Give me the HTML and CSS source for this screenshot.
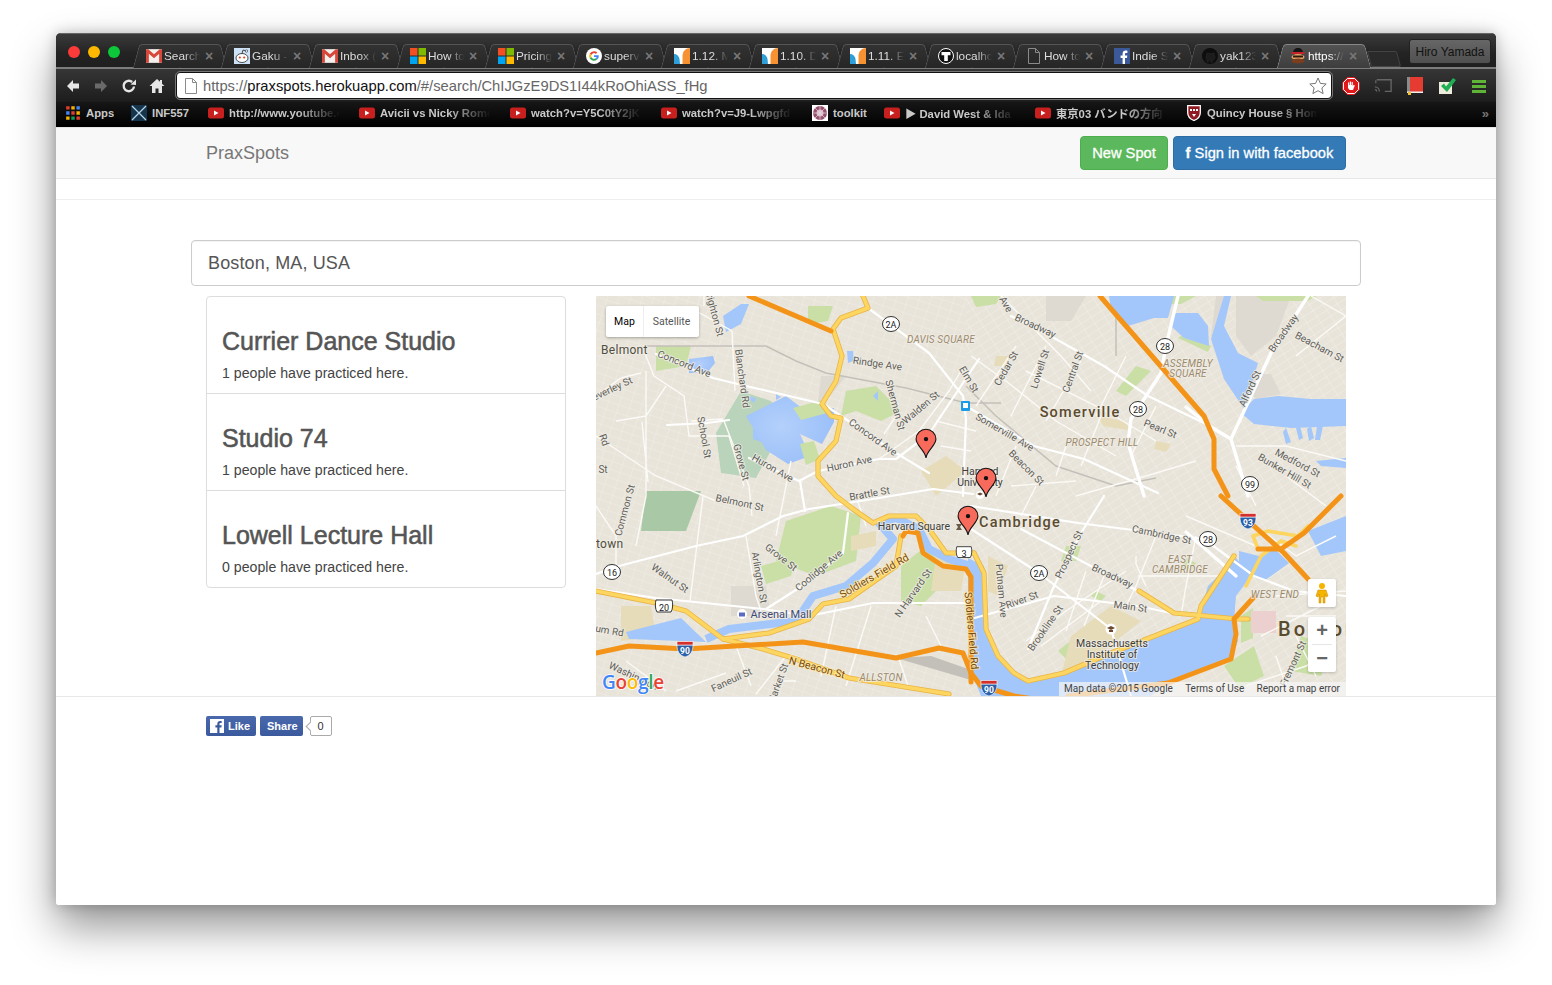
FILE: index.html
```html
<!DOCTYPE html>
<html lang="en">
<head>
<meta charset="utf-8">
<title>PraxSpots</title>
<link rel="stylesheet" href="styles.css">
</head>
<body>
<svg class="defs" width="0" height="0" aria-hidden="true">
  <defs>
    <symbol id="i-gmail" viewBox="0 0 14 12"><rect width="14" height="12" fill="#f4f0ee"/><path d="M0 0h2l5 4.500L12 0h2v12h-2.500V4L7 8 2.500 4v8H0z" fill="#d8473a"/></symbol>
    <symbol id="i-ms" viewBox="0 0 16 16"><rect width="7.500" height="7.500" fill="#f25022"/><rect x="8.500" width="7.500" height="7.500" fill="#7fba00"/><rect y="8.500" width="7.500" height="7.500" fill="#00a4ef"/><rect x="8.500" y="8.500" width="7.500" height="7.500" fill="#ffb900"/></symbol>
    <symbol id="i-reddit" viewBox="0 0 16 16"><rect width="16" height="16" fill="#cee3f8"/><ellipse cx="8" cy="10" rx="6" ry="4.500" fill="#fff" stroke="#222" stroke-width=".8"/><circle cx="5.800" cy="9.500" r="1.100" fill="#e0431f"/><circle cx="10.200" cy="9.500" r="1.100" fill="#e0431f"/><path d="M8 5.500 9 2l3 .8" fill="none" stroke="#222" stroke-width=".8"/><circle cx="12.500" cy="3" r="1.200" fill="#fff" stroke="#222" stroke-width=".6"/></symbol>
    <symbol id="i-g" viewBox="0 0 16 16"><circle cx="8" cy="8" r="8" fill="#fff"/><path d="M8 3.200a4.800 4.800 0 0 1 3.300 1.300L9.900 5.900A2.800 2.800 0 0 0 5.300 7L3.700 5.700A4.800 4.800 0 0 1 8 3.200z" fill="#ea4335"/><path d="M3.700 5.700 5.300 7a2.800 2.800 0 0 0 0 2L3.700 10.300a4.800 4.800 0 0 1 0-4.600z" fill="#fbbc05"/><path d="M3.700 10.300 5.300 9a2.800 2.800 0 0 0 4.300 1.300l1.500 1.200A4.800 4.800 0 0 1 3.700 10.300z" fill="#34a853"/><path d="M12.800 7.200H8v1.900h2.700a2.400 2.400 0 0 1-1.100 1.200l1.500 1.200a4.800 4.800 0 0 0 1.700-4.300z" fill="#4285f4"/></symbol>
    <symbol id="i-jira" viewBox="0 0 16 16"><rect width="16" height="16" fill="#fff"/><path d="M0 6c3 0 5 2 5.500 5l.5 5H0z" fill="#2f9fd8"/><path d="M16 0c-4 0-7.500 3-7.500 8v8H16z" fill="#f79232"/></symbol>
    <symbol id="i-t" viewBox="0 0 16 16"><circle cx="8" cy="8" r="7.500" fill="#111" stroke="#fff"/><path d="M3.500 4h9v3.200H9.800V13H6.200V7.200H3.500z" fill="#fff"/></symbol>
    <symbol id="i-doc" viewBox="0 0 12 16"><path d="M.5.500h7l4 4v11H.500z M7.500.500v4h4" fill="none" stroke="#8a8a8a"/></symbol>
    <symbol id="i-fb" viewBox="0 0 16 16"><rect width="16" height="16" fill="#3b5998"/><path d="M11 16v-6h2l.3-2.400H11V6c0-.7.3-1.100 1.200-1.100h1.200V2.700c-.3 0-1-.1-1.800-.1-1.800 0-3 1.100-3 3.100v1.900h-2V10h2v6z" fill="#fff"/></symbol>
    <symbol id="i-gh" viewBox="0 0 16 16"><circle cx="8" cy="8" r="8" fill="#0e0e0e"/><path d="M6 15v-2.200c-2 .4-2.600-.9-2.800-1.500M10 15v-2.600c2-.3 3-1.400 3-3.300 0-.9-.3-1.600-.8-2.100.1-.6.100-1.300-.2-1.900-.7 0-1.300.3-1.900.7a7 7 0 0 0-3.200 0C6.300 5.400 5.700 5.100 5 5.100c-.3.600-.3 1.300-.2 1.900-.5.500-.8 1.200-.8 2.100 0 1.900 1 3 3 3.300" fill="#1c1c1c" stroke="#2b2b2b" stroke-width=".6"/></symbol>
    <symbol id="i-ninja" viewBox="0 0 16 16"><path d="M3 5c0-3 2-5 5-5s5 2 5 5z" fill="#151515"/><rect x="1.500" y="4" width="13" height="2" fill="#c8212a"/><ellipse cx="8" cy="9" rx="6.500" ry="3" fill="#e8a566"/><rect x="3" y="7.500" width="10" height="2" fill="#2a1a10"/><ellipse cx="8" cy="13" rx="6.500" ry="2.600" fill="#7a3d1d"/></symbol>
    <symbol id="i-yt" viewBox="0 0 16 12"><rect y=".500" width="16" height="11" rx="2.500" fill="#c8201e"/><path d="M6 3.500v5l4.500-2.500z" fill="#fff"/></symbol>
    <symbol id="i-x" viewBox="0 0 16 16"><rect width="16" height="16" fill="#14354c"/><path d="M1 1l14 14M15 1 1 15" stroke="#b8d4e6" stroke-width="1.300"/></symbol>
    <symbol id="i-tool" viewBox="0 0 16 16"><rect width="16" height="16" fill="#fff"/><circle cx="8" cy="8" r="7" fill="#96506e"/><circle cx="8" cy="8" r="3.500" fill="#d8b8c6"/><path d="M3 3l10 10M13 3 3 13M1 8h14M8 1v14" stroke="#e8d8df" stroke-width=".7"/></symbol>
    <symbol id="i-shield" viewBox="0 0 14 16"><path d="M.7.700h12.600v7c0 4-3 6.500-6.300 7.800C3.700 14.200.7 11.700.7 7.700z" fill="#8f1a24" stroke="#fff" stroke-width="1.300"/><path d="M3 4h2v2H3zM6 4h2v2H6zM9 4h2v2H9zM5 9h4l-2 3z" fill="#fff"/></symbol>
    <symbol id="i-pin" viewBox="0 0 20 28"><path d="M10 27C9 20 1 16 1 10a9 9 0 0 1 18 0c0 6-8 10-9 17z" fill="#f76a5c" stroke="#111" stroke-width="1"/><circle cx="10" cy="10" r="2" fill="#111"/></symbol>
    <symbol id="s-us" viewBox="0 0 20 18"><path d="M2 2h16c1 3 1 9-1 12H3C1 11 1 5 2 2z" fill="#fff" stroke="#333" stroke-width="1"/></symbol>
    <symbol id="s-state" viewBox="0 0 20 18"><ellipse cx="10" cy="9" rx="8.500" ry="7.500" fill="#fff" stroke="#333" stroke-width="1"/></symbol>
    <symbol id="s-i" viewBox="0 0 18 18"><path d="M1 5h16c0 6-2 10-8 12C3 15 1 11 1 5z" fill="#2b5fa8" stroke="#fff" stroke-width=".6"/><path d="M1 1.500h16V5H1z" fill="#d4302b" stroke="#fff" stroke-width=".6"/></symbol>
    <pattern id="grid-a" width="11" height="8" patternUnits="userSpaceOnUse" patternTransform="rotate(18)"><path d="M0 0h11M0 0v8" fill="none" stroke="#f3f1ea" stroke-width=".8"/></pattern>
    <pattern id="grid-b" width="12" height="7" patternUnits="userSpaceOnUse" patternTransform="rotate(-32)"><path d="M0 0h12M0 0v7" fill="none" stroke="#f5f3ec" stroke-width=".8"/></pattern>
    <radialGradient id="pond" cx=".4" cy=".45" r=".6"><stop offset="0" stop-color="#b4d0fb"/><stop offset="1" stop-color="#9bc0f9"/></radialGradient>
  </defs>
</svg>

<div class="window">
  <header class="chrome">
    <div class="tabstrip">
      <div class="lights"><i class="light red"></i><i class="light amber"></i><i class="light green"></i></div>
      <div class="tabs">
        <div class="tab"><svg class="fav"><use href="#i-gmail"/></svg><span class="tab-label">Search</span><span class="tab-x">×</span></div>
        <div class="tab"><svg class="fav"><use href="#i-reddit"/></svg><span class="tab-label">Gaku -</span><span class="tab-x">×</span></div>
        <div class="tab"><svg class="fav"><use href="#i-gmail"/></svg><span class="tab-label">Inbox (</span><span class="tab-x">×</span></div>
        <div class="tab"><svg class="fav"><use href="#i-ms"/></svg><span class="tab-label">How to</span><span class="tab-x">×</span></div>
        <div class="tab"><svg class="fav"><use href="#i-ms"/></svg><span class="tab-label">Pricing</span><span class="tab-x">×</span></div>
        <div class="tab"><svg class="fav"><use href="#i-g"/></svg><span class="tab-label">superv</span><span class="tab-x">×</span></div>
        <div class="tab"><svg class="fav"><use href="#i-jira"/></svg><span class="tab-label">1.12. M</span><span class="tab-x">×</span></div>
        <div class="tab"><svg class="fav"><use href="#i-jira"/></svg><span class="tab-label">1.10. D</span><span class="tab-x">×</span></div>
        <div class="tab"><svg class="fav"><use href="#i-jira"/></svg><span class="tab-label">1.11. E</span><span class="tab-x">×</span></div>
        <div class="tab"><svg class="fav"><use href="#i-t"/></svg><span class="tab-label">localho</span><span class="tab-x">×</span></div>
        <div class="tab"><svg class="fav"><use href="#i-doc"/></svg><span class="tab-label">How to</span><span class="tab-x">×</span></div>
        <div class="tab"><svg class="fav"><use href="#i-fb"/></svg><span class="tab-label">Indie S</span><span class="tab-x">×</span></div>
        <div class="tab"><svg class="fav"><use href="#i-gh"/></svg><span class="tab-label">yak123</span><span class="tab-x">×</span></div>
        <div class="tab tab-active"><svg class="fav"><use href="#i-ninja"/></svg><span class="tab-label">https://</span><span class="tab-x">×</span></div>
        <div class="tab-new"></div>
      </div>
      <div class="profile">Hiro Yamada</div>
    </div>
    <div class="toolbar">
      <div class="nav-btns">
        <svg class="nav-icon" viewBox="0 0 16 16"><path d="M8 2 2 8l6 6V10.500h6v-5H8z" fill="#e6e6e6"/></svg>
        <svg class="nav-icon" viewBox="0 0 16 16"><path d="M8 2l6 6-6 6V10.500H2v-5h6z" fill="#6a6a6a"/></svg>
        <svg class="nav-icon" viewBox="0 0 16 16"><path d="M13 8.500A5.200 5.200 0 1 1 11.200 4" fill="none" stroke="#e6e6e6" stroke-width="2.400"/><path d="M9.500 6.500 15 7V1.500z" fill="#e6e6e6"/></svg>
        <svg class="nav-icon" viewBox="0 0 16 16"><path d="M8 1 0.500 8H3v7h3.500v-4.500h3V15H13V8h2.500L13 5.700V2h-2v1.800z" fill="#e6e6e6"/></svg>
      </div>
      <div class="omnibox">
        <svg class="omni-doc"><use href="#i-doc"/></svg>
        <span class="url"><span class="url-dim">https://</span>praxspots.herokuapp.com<span class="url-dim">/#/search/ChIJGzE9DS1I44kRoOhiASS_fHg</span></span>
        <svg class="omni-star" viewBox="0 0 18 18"><path d="M9 1l2.400 5.400 5.800.6-4.300 3.900 1.200 5.700L9 13.700l-5.100 2.900 1.200-5.700L.8 7l5.800-.6z" fill="#fff" stroke="#777"/></svg>
      </div>
      <div class="ext-btns">
        <svg class="ext" viewBox="0 0 18 18"><path d="M5.500 0h7L18 5.500v7L12.500 18h-7L0 12.500v-7z" fill="#e01a1a"/><path d="M5.500 1.500h7l4 4v7l-4 4h-7l-4-4v-7z" fill="none" stroke="#fff"/><path d="M6 8V5.500h1.200V8h.6V4.500H9V8h.6V5h1.200v4l1-1.200 1 .6L11 13H7.500L6 11z" fill="#fff"/></svg>
        <svg class="ext" viewBox="0 0 20 18"><path d="M3 2h16v13h-7" fill="none" stroke="#666" stroke-width="1.500"/><path d="M2 2.500V6M1 10a5 5 0 0 1 5 5M1 13a2 2 0 0 1 2 2" fill="none" stroke="#666" stroke-width="1.400"/></svg>
        <svg class="ext" viewBox="0 0 18 18"><rect x="1" y="0" width="16" height="15" fill="#e53b30"/><rect x="1" y="0" width="3" height="15" fill="#8a8a8a"/><path d="M1 14.500h16V16H1z" fill="#eee"/><rect x="2" y="15" width="3" height="3" fill="#f2c230"/></svg>
        <svg class="ext" viewBox="0 0 18 18"><rect x="1" y="5" width="13" height="12" fill="#eeeadc"/><path d="M3 9l3-2.500 2 3L15 1l3 2-9 12z" fill="#1fae54"/></svg>
        <svg class="ext" viewBox="0 0 18 18"><path d="M2 3h14v3H2zM2 8h14v3H2zM2 13h14v3H2z" fill="#5fb336"/></svg>
      </div>
    </div>
    <div class="bookmarks">
      <div class="bm"><svg class="bm-icon" viewBox="0 0 14 14"><path d="M1 1h3v3H1z" fill="#e23d30"/><path d="M5.500 1h3v3h-3z" fill="#f4b400"/><path d="M10 1h3v3h-3z" fill="#4285f4"/><path d="M1 5.500h3v3H1z" fill="#4285f4"/><path d="M5.500 5.500h3v3h-3z" fill="#e23d30"/><path d="M10 5.500h3v3h-3z" fill="#f4b400"/><path d="M1 10h3v3H1z" fill="#f4b400"/><path d="M5.500 10h3v3h-3z" fill="#0f9d58"/><path d="M10 10h3v3h-3z" fill="#e23d30"/></svg><span class="bm-label w-28">Apps</span></div>
      <div class="bm"><svg class="bm-icon"><use href="#i-x"/></svg><span class="bm-label w-39">INF557</span></div>
      <div class="bm"><svg class="bm-icon"><use href="#i-yt"/></svg><span class="bm-label w-113 fade">http://www.youtube.c</span></div>
      <div class="bm"><svg class="bm-icon"><use href="#i-yt"/></svg><span class="bm-label w-113 fade">Avicii vs Nicky Rome</span></div>
      <div class="bm"><svg class="bm-icon"><use href="#i-yt"/></svg><span class="bm-label w-113 fade">watch?v=Y5C0tY2jK</span></div>
      <div class="bm"><svg class="bm-icon"><use href="#i-yt"/></svg><span class="bm-label w-113 fade">watch?v=J9-Lwpgfd</span></div>
      <div class="bm"><svg class="bm-icon"><use href="#i-tool"/></svg><span class="bm-label w-34">toolkit</span></div>
      <div class="bm"><svg class="bm-icon"><use href="#i-yt"/></svg><span class="bm-label w-113 fade">▶ David West &amp; Ida</span></div>
      <div class="bm"><svg class="bm-icon"><use href="#i-yt"/></svg><span class="bm-label w-113 fade">東京03 バンドの方向</span></div>
      <div class="bm"><svg class="bm-icon"><use href="#i-shield"/></svg><span class="bm-label w-113 fade">Quincy House § Hom</span></div>
      <span class="bm-more">»</span>
    </div>
  </header>

  <main class="page">
    <nav class="navbar">
      <a class="brand">PraxSpots</a>
      <div class="nav-actions">
        <a class="btn btn-green">New Spot</a>
        <a class="btn btn-blue"><b class="fb-f">f</b> Sign in with facebook</a>
      </div>
    </nav>
    <div class="rule"></div>
    <div class="search-wrap"><div class="search">Boston, MA, USA</div></div>
    <section class="results">
      <ul class="spots">
        <li class="spot"><h3>Currier Dance Studio</h3><p>1 people have practiced here.</p></li>
        <li class="spot"><h3>Studio 74</h3><p>1 people have practiced here.</p></li>
        <li class="spot"><h3>Lowell Lecture Hall</h3><p>0 people have practiced here.</p></li>
      </ul>
      <div class="map">
        <svg class="map-svg" viewBox="0 0 750 400" width="750" height="400">
          <rect width="750" height="400" fill="#e8e4da"/>
          <rect width="370" height="400" fill="url(#grid-a)"/>
          <rect x="370" width="380" height="400" fill="url(#grid-b)"/>
          <!-- greys / rail yards -->
          <g fill="#dedad2"><path d="M225 80h25l-20 25h-8z"/><path d="M620 0h15l-15 40h-5z"/><path d="M640 0h55l-15 40-25 20-15-20z"/><path d="M660 78l15 0 10 20-25 5-10-10z"/><path d="M450 0h40l-15 25-25 0z"/><path d="M135 290h35l5 30-40 0z"/></g>
          <!-- parks -->
          <g fill="#c9dfa6">
            <path d="M60 50h35l-5 20-30 5z"/><path d="M212 10h25l-5 15-20 3z"/><path d="M250 95l30-5 25 25-20 10-25-10-15 5z"/><path d="M196 113l30-8 10 10-35 12z"/>
            <path d="M190 225l45-15 30 10-5 45-40 15-40-15z"/><path d="M165 270l35-10-5 20-25 8z"/><path d="M305 270l25-20 25 30-30 30-20-5z"/>
            <path d="M375 0l30 0-5 8-20 3z"/><path d="M530 0h70l-15 8-40 0z"/><path d="M540 70l15 5-25 25-10-5z"/><path d="M590 36l25 14-3 6-30-14z"/>
            <path d="M628 370l30-20 10 30-25 12z"/><path d="M645 320l12-8 0 30-12 5z"/><path d="M705 340l30 10-10 30-30-5z"/>
            <path d="M660 0h60l-8 5h-45z"/><path d="M590 262l10 5-5 8-10-3z"/><path d="M470 250l15 0-5 15-15 0z"/><path d="M500 295l10 5-5 5-10-5z"/>
            <path d="M462 355l25-20 10 5-25 25z"/>
          </g>
          <path d="M50 195h55l-15 40-45 0z" fill="#a9c9a6"/>
          <path d="M145 95l30 10 15 22-30 55-35-5-5-40z" fill="#b9d4bb"/>
          <!-- campus tan -->
          <g fill="#e7dcb9"><path d="M325 175l25-15 20 15-30 25z"/><path d="M25 310h30l5 30-35 5z"/><path d="M255 240l25-5v15l-25 5z"/><path d="M475 340l40-30 30 15-50 40-30 15z"/><path d="M392 260l20 10-10 30-10-5z"/><path d="M502 120l25 5 10 10-30-5z"/><path d="M560 145l15 3-5 8-12-3z"/><path d="M400 60h15l-5 10h-12z"/><path d="M340 260l30 5-5 30-30 0z"/></g>
          <path d="M655 315h25v22h-25z" fill="#eccfcf"/>
          <!-- water -->
          <g fill="#a3c7fb">
            <path d="M127 20l18-12h8l-8 20-15 8z"/><path d="M251 55h6l1 10-6 2z"/><path d="M277 100l5-5v10z"/><path d="M150 100l10 2-2 5zM180 98l5 3-5 3z"/><path d="M157 131l8 6 0 9-8-3z"/>
            <path d="M513 0h65l-6 22-14 0-26 8-17-17z"/>
            <path d="M578 17h24l10 13 1 20-25-8-13-12z"/>
            <path d="M628 0h7l-7 30 14 27 20 10-14 46-20-30-13-40z"/>
            <path d="M645 117l13-14 24-3 33 3 35 0v27l-55 2-37-4z"/>
            <path d="M690 132l5 14-5 2-3-12zM704 130l3 12-4 2-3-12zM715 130l3 12-5 3-2-12zM727 130l-3 14-5 0 2-14z"/>
            <path d="M720 165l30-3v10l-25-2z"/>
            <!-- Charles basin -->
            <path d="M372 262l16 8 2 63 12 27 16 17 14 8 36-8 47-20 87-34 10-33 28-28 15 18-15 20-2 25 4 20-7 17-60 23-20 15H385l-10-25-3-50z"/>
            <path d="M30 336l55-14 25 24-77-3z"/>
            <path d="M643 255l20 5 15-8 15 15-25 18-25-10z"/>
            <path d="M712 235l38-15v35l-25 5z"/>
          </g>
          <path d="M110 343l23-10 67-8 17-25 33-10 27-23 20-24-14-16 17-5 23 11 10 20 20 10 22 7" fill="none" stroke="#a3c7fb" stroke-width="8" stroke-linejoin="round"/>
          <path d="M150 120l40-20 24 18 24-6 0 14-12 22-22-10 10 22-22 8-22-14z" fill="url(#pond)"/>
          <path d="M93 63l24-3 2 7-8 10h-18z" fill="url(#pond)"/>
          <g fill="#c9dfa6"><path d="M204 148l14-3 6 18-14 6z"/><path d="M197 112l30-8 8 12-30 8z"/></g>

          <!-- rail -->
          <g fill="none" stroke="#c3c0ba" stroke-width="1.500"><path d="M50 50h120l30 15 30 12 80 15 60 15h35"/><path d="M370 90l30 30 60 50 60 20 40-8"/><path d="M520 20l0 40"/></g>
          <path d="M300 362l75 22v-10l-40-14z" fill="#c3c0ba"/>

          <!-- minor streets -->
          <g fill="none" stroke="#fbfaf6" stroke-width="1.400">
            <path d="M48 55l10 25 30 20 5 40 40 0 15 50M20 125l30-5 20-30M50 75l0 125 -10 50M46 126l6 60M95 125l32-2M100 15l36 20 3 60"/>
            <path d="M0 100l25-18 20-5M0 140l30 20 30 20 60 25M108 0l0 10M128 125l25 65 3 30M195 165l-15 75"/>
            <path d="M260 200l10 30M300 120l-12 18M283 163l40-28 30-40 12-20M340 125l40 10M345 150l30 5"/>
            <path d="M0 210l20 30 0 30M107 200l-5 40-8 65M150 240l10 60M160 300l5 15M240 310l-15 70M275 310l-25 80M302 360l10 30M330 320l15 30M185 385l15 0"/>
            <path d="M140 350l15 40M30 365l40 30M80 395l50-18M160 398l30-38"/>
            <path d="M405 0l60 60 30 35M420 50l-40 60M450 50l-35 70M485 65l-35 60M530 60l-30 60M430 75l80 40 50 30M470 150l-10 30M505 120l-20 50"/>
            <path d="M375 60l35 25 50 40 60 35M420 150l-20 50M440 190l-15 30M560 110l-25 50M480 200l70-20 50-15M415 190l65-5"/>
            <path d="M540 260l0 8 10 22M542 280h80M600 240l-10 50-5 30M560 240l-20 50-10 20M508 280l-20 50M430 345l40-30 60-40M445 350l60-45M490 275l-20 60M590 220l70 30"/>
            <path d="M660 230l40 30 40-20M680 300l70-5M690 320l50 0M665 340l60-30M650 390l60-20 30-20M690 390l-10-30M700 340l20 40"/>
            <path d="M640 150l50 0 60 15M640 170l20 40M690 180l40 30M715 0l35 20M700 60l50-40"/>
          </g>
          <!-- major white roads -->
          <g fill="none" stroke="#fff" stroke-width="2.200" stroke-linecap="round" stroke-linejoin="round">
            <path d="M60 58l57 24 33 8 77 18 18 12 55 37 33 20"/>
            <path d="M153 162l50 23 19-10 61-12 17 0 33-25 50-75"/>
            <path d="M0 278l23-8 77-20 47-10 40-20 26-7 64-10 60-10 40 5"/>
            <path d="M415 20l43 22 50 28 44 30 56 27 27 16"/>
            <path d="M375 113l63 37 50 13 74 34"/>
            <path d="M272 12l61 45 34 43 3 23-3 77"/>
            <path d="M375 233l68 44 72 56 20 67"/>
            <path d="M375 210l107 17 126 16 50 37 40 15 52 5"/>
            <path d="M508 200l-23 37-27 53-26 63"/>
            <path d="M425 233l117 62"/>
            <path d="M375 323l83-23 84 10 33 7"/>
            <path d="M0 293l60 9 107 11 46 7 64-13 98 0"/>
            <path d="M170 313l33-21 44-35 5-40"/>
            <path d="M204 185l5 30"/>
            <path d="M133 124l-22 3-40 2"/>
          </g>
          <g fill="none" stroke="#fff" stroke-width="3.400" stroke-linecap="round" stroke-linejoin="round">
            <path d="M582 0l-12 50-5 27-30 46-3 24 16 53"/>
            <path d="M712 0l-37 57-40 86 17 57"/>
            <path d="M635 143l-20-12-25-20"/>
            <path d="M590 236l50 44"/>
          </g>
          <!-- arterials -->
          <g fill="none" stroke="#e9b445" stroke-width="5.200" stroke-linecap="round" stroke-linejoin="round">
            <path d="M267 0l5 12-27 10-8 11 9 27-6 25-14 23 9 12 10 2-5 23-18 20 0 15 18 20 17 13 20 14 16-7h27l13 13 17 24 28 0"/>
            <path d="M378 257l10 20 2 56 12 27 16 17 14 8 36-8 47-20 87-34 3-13 33-50"/>
            <path d="M543 295l35 22 64 6 10 0"/>
            <path d="M0 295l60 12 30 8 37 28 40 10 33 10 53 19 100 16"/>
            <path d="M127 343l46-6 40-14 14-15 26-5 47-33 5-30"/>
          </g>
          <g fill="none" stroke="#fdd561" stroke-width="3.600" stroke-linecap="round" stroke-linejoin="round">
            <path d="M267 0l5 12-27 10-8 11 9 27-6 25-14 23 9 12 10 2-5 23-18 20 0 15 18 20 17 13 20 14 16-7h27l13 13 17 24 28 0"/>
            <path d="M378 257l10 20 2 56 12 27 16 17 14 8 36-8 47-20 87-34 3-13 33-50"/>
            <path d="M543 295l35 22 64 6 10 0"/>
            <path d="M0 295l60 12 30 8 37 28 40 10 33 10 53 19 100 16"/>
            <path d="M127 343l46-6 40-14 14-15 26-5 47-33 5-30"/>
            <path d="M657 240l5 13 23 0M657 240l15-5 30 5 10-10M650 290l15-30 20-15 15 5"/>
          </g>
          <!-- highways -->
          <g fill="none" stroke="#f39418" stroke-width="5" stroke-linecap="round" stroke-linejoin="round">
            <path d="M153 0l82 35"/>
            <path d="M504 0l58 67 46 53 10 23v30l14 27"/>
            <path d="M625 200l33 30 30 27 24 26"/>
            <path d="M745 200l-37 37-23 16-23 0"/>
            <path d="M0 357l33-7 57 3 117-7 93 16 43-10 24 5 8 20 10 13 33 10 20 3"/>
            <path d="M472 400l100-13 63-24 5-25-2-15 20-22"/>
            <path d="M307 240l3-5 12 2 5 20 20 13 23 3 5 8 0 30 0 75"/>
          </g>
          <!-- labels -->
          <g class="lbl">
            <text transform="translate(115 17) rotate(75)">Brighton St</text>
            <text transform="translate(87 71) rotate(22)">Concord Ave</text>
            <text transform="translate(143 83) rotate(82)">Blanchard Rd</text>
            <text transform="translate(281 71) rotate(8)">Rindge Ave</text>
            <text transform="translate(296 110) rotate(75)">Sherman St</text>
            <text transform="translate(327 114) rotate(-40)">Walden St</text>
            <text transform="translate(275 144) rotate(35)">Concord Ave</text>
            <text transform="translate(105 142) rotate(80)">School St</text>
            <text transform="translate(142 167) rotate(75)">Grove St</text>
            <text transform="translate(175 175) rotate(30)">Huron Ave</text>
            <text transform="translate(254 171) rotate(-12)">Huron Ave</text>
            <text transform="translate(15 97) rotate(-25)">Beverley St</text>
            <text transform="translate(5 145) rotate(70)">Rd</text>
            <text transform="translate(7 177)">St</text>
            <text transform="translate(274 201) rotate(-10)">Brattle St</text>
            <text transform="translate(143 210) rotate(12)">Belmont St</text>
            <text transform="translate(32 215) rotate(-75)">Common St</text>
            <text transform="translate(183 264) rotate(38)">Grove St</text>
            <text transform="translate(160 282) rotate(80)">Arlington St</text>
            <text transform="translate(225 277) rotate(-40)">Coolidge Ave</text>
            <text transform="translate(320 299) rotate(-55)">N Harvard St</text>
            <text transform="translate(72 285) rotate(35)">Walnut St</text>
            <text transform="translate(13 338) rotate(10)">um Rd</text>
            <text transform="translate(36 383) rotate(25)">Washington</text>
            <text transform="translate(137 387) rotate(-25)">Faneuil St</text>
            <text transform="translate(185 389) rotate(-70)">Market St</text>
            <text transform="translate(407 10) rotate(60)">Ave</text>
            <text transform="translate(438 33) rotate(25)">Broadway</text>
            <text transform="translate(370 85) rotate(60)">Elm St</text>
            <text transform="translate(413 74) rotate(-60)">Cedar St</text>
            <text transform="translate(447 74) rotate(-72)">Lowell St</text>
            <text transform="translate(480 77) rotate(-70)">Central St</text>
            <text transform="translate(563 136) rotate(22)">Pearl St</text>
            <text transform="translate(407 139) rotate(30)">Somerville Ave</text>
            <text transform="translate(428 174) rotate(45)">Beacon St</text>
            <text transform="translate(657 94) rotate(-65)">Alford St</text>
            <text transform="translate(690 39) rotate(-55)">Broadway</text>
            <text transform="translate(722 54) rotate(28)">Beacham St</text>
            <text transform="translate(700 170) rotate(28)">Medford St</text>
            <text transform="translate(687 178) rotate(30)">Bunker Hill St</text>
            <text transform="translate(565 242) rotate(12)">Cambridge St</text>
            <text transform="translate(515 283) rotate(25)">Broadway</text>
            <text transform="translate(476 260) rotate(-65)">Prospect St</text>
            <text transform="translate(402 295) rotate(85)">Putnam Ave</text>
            <text transform="translate(427 307) rotate(-20)">River St</text>
            <text transform="translate(452 334) rotate(-55)">Brookline St</text>
            <text transform="translate(534 314) rotate(8)">Main St</text>
            <text transform="translate(700 369) rotate(-65)">Fremont St</text>
            <text transform="translate(372 335) rotate(85)" class="lbl-road">Soldiers Field Rd</text>
            <text transform="translate(280 283) rotate(-30)" class="lbl-road">Soldiers Field Rd</text>
            <text transform="translate(220 375) rotate(15)" class="lbl-road">N Beacon St</text>
          </g>
          <g class="lbl lbl-area">
            <text x="345" y="47">DAVIS SQUARE</text>
            <text x="592" y="71">ASSEMBLY</text>
            <text x="592" y="81">SQUARE</text>
            <text x="506" y="150">PROSPECT HILL</text>
            <text x="584" y="267">EAST</text>
            <text x="584" y="277">CAMBRIDGE</text>
            <text x="679" y="302">WEST END</text>
            <text x="285" y="385">ALLSTON</text>
          </g>
          <g class="lbl lbl-poi">
            <text x="318" y="234">Harvard Square</text>
            <text x="384" y="179">Harvard</text>
            <text x="384" y="190">University</text>
            <text x="516" y="351">Massachusetts</text>
            <text x="516" y="362">Institute of</text>
            <text x="516" y="373">Technology</text>
            <text x="185" y="322" class="lbl-mall">Arsenal Mall</text>
          </g>
          <g class="lbl lbl-town">
            <text x="5" y="58" class="lbl-anchor-start">Belmont</text>
            <text x="0" y="252" class="lbl-anchor-start">town</text>
          </g>
          <g class="lbl lbl-city">
            <text x="484" y="121">Somerville</text>
            <text x="424" y="231">Cambridge</text>
          </g>
          <text x="682" y="340" class="lbl-boston">Boston</text>
          <!-- poi icons -->
          <circle cx="146" cy="318" r="5" fill="#fff"/><path d="M143 316.500h6v4h-6z" fill="#5c6bc0"/>
          <circle cx="515" cy="333" r="5.500" fill="#fff"/><path d="M511 332l4-2 4 2-4 2zM513 334v2h4v-2" fill="#6b4a30"/>
          <circle cx="384" cy="199" r="4" fill="#fff"/><path d="M381 198l3-1.500 3 1.500-3 1.500z" fill="#6b4a30"/>
          <path d="M360 228h6l-2 3 2 3h-6l2-3z" fill="#6a5a4a"/>
          <rect x="365" y="105" width="9" height="10" rx="1" fill="#1a9be8"/><rect x="367" y="107" width="5" height="5" fill="#fff"/>
          <!-- shields -->
          <g class="shield">
            <use href="#s-state" x="285" y="19" width="20" height="18"/><text x="295" y="31.500">2A</text>
            <use href="#s-state" x="559" y="41" width="20" height="18"/><text x="569" y="53.500">28</text>
            <use href="#s-state" x="532" y="104" width="20" height="18"/><text x="542" y="116.500">28</text>
            <use href="#s-state" x="644" y="179" width="20" height="18"/><text x="654" y="191.500">99</text>
            <use href="#s-state" x="602" y="234" width="20" height="18"/><text x="612" y="246.500">28</text>
            <use href="#s-state" x="433" y="268" width="20" height="18"/><text x="443" y="280.500">2A</text>
            <use href="#s-state" x="6" y="267" width="20" height="18"/><text x="16" y="279.500">16</text>
            <use href="#s-us" x="58" y="302" width="20" height="18"/><text x="68" y="314.500">20</text>
            <use href="#s-us" x="359" y="248" width="18" height="18"/><text x="368" y="260.500">3</text>
          </g>
          <g class="shield shield-i">
            <use href="#s-i" x="80" y="344" width="18" height="18"/><text x="89" y="358">90</text>
            <use href="#s-i" x="384" y="383" width="18" height="18"/><text x="393" y="397">90</text>
            <use href="#s-i" x="643" y="216" width="18" height="18"/><text x="652" y="230">93</text>
          </g>
          <!-- markers -->
          <use href="#i-pin" x="319" y="132" width="22" height="31"/>
          <use href="#i-pin" x="379" y="171" width="22" height="31"/>
          <use href="#i-pin" x="361" y="209" width="22" height="31"/>
          <text x="6" y="393" class="g-logo"><tspan fill="#4285f4">G</tspan><tspan fill="#ea4335">o</tspan><tspan fill="#fbbc05">o</tspan><tspan fill="#4285f4">g</tspan><tspan fill="#34a853">l</tspan><tspan fill="#ea4335">e</tspan></text>
        </svg>
        <div class="map-type"><span class="mt-active">Map</span><span class="mt">Satellite</span></div>
        <div class="pegman"><svg viewBox="0 0 14 22" width="14" height="22"><circle cx="7" cy="4" r="3" fill="#f5b400"/><path d="M3 8h8l2 6-2 1-1-3v9H8v-6H6v6H4v-9l-1 3-2-1z" fill="#f5b400" stroke="#c98a00" stroke-width=".5"/></svg></div>
        <div class="zoom-ctl"><span class="z-btn">+</span><span class="z-btn z-minus">−</span></div>
        <div class="attrib"><span>Map data ©2015 Google</span><span>Terms of Use</span><span>Report a map error</span></div>
      </div>
    </section>
    <footer class="footer">
      <a class="fb-btn fb-like"><svg class="fb-mark" viewBox="0 0 14 14"><rect width="14" height="14" fill="#fff"/><path d="M9.500 14V8.500h1.900l.3-2.200H9.500V5c0-.6.2-1 1.100-1h1.100V2c-.3 0-.9-.1-1.600-.1-1.700 0-2.800 1-2.800 2.900v1.500H5.400v2.200h1.900V14z" fill="#3b5a9e"/></svg>Like</a>
      <a class="fb-btn">Share</a>
      <span class="fb-count">0</span>
    </footer>
  </main>
</div>
</body>
</html>
```

FILE: styles.css
```css
* { box-sizing: border-box; }
html, body { margin: 0; padding: 0; background: #fff; height: 985px; overflow: hidden; }
body { padding: 33px 56px 0; font-family: "Liberation Sans", Arial, sans-serif; color: #333; }
.defs { position: absolute; }
a { text-decoration: none; }

.window { width: 1440px; height: 872px; border-radius: 5px 5px 3px 3px; background: #fff; box-shadow: 0 22px 44px rgba(0,0,0,.42), 0 0 14px rgba(0,0,0,.22); overflow: hidden; display: flex; flex-direction: column; }

/* browser chrome */
.chrome { height: 94px; flex: none; background: #000; display: flex; flex-direction: column; }
.tabstrip { height: 36px; background: linear-gradient(#3a3a3a, #232323 60%, #1f1f1f); border-top: 1px solid #666; border-bottom: 2px solid #7c7c7c; display: flex; position: relative; }
.lights { width: 77px; flex: none; display: flex; gap: 8px; padding: 12px 0 0 12px; }
.light { width: 12px; height: 12px; border-radius: 50%; display: block; }
.red { background: #fb3b3a; } .amber { background: #fdb901; } .green { background: #0cc83a; }
.tabs { display: flex; padding-top: 10px; height: 34px; }
.tab { width: 88px; height: 24px; position: relative; display: flex; align-items: center; padding: 0 0 0 13px; color: #ddd; font-size: 11.800px; flex: none; }
.tab::before, .tab::after { content: ""; position: absolute; top: 0; bottom: 0; width: 52%; background: linear-gradient(#323232, #262626); border-top: 1px solid #555; z-index: 0; }
.tab::before { left: 3px; border-left: 1px solid #555; border-radius: 4px 0 0 0; transform: skewX(-15deg); }
.tab::after { right: -3px; border-right: 1px solid #555; border-radius: 0 4px 0 0; transform: skewX(15deg); }
.tab-active { z-index: 2; color: #fff; }
.tab-active::before, .tab-active::after { background: linear-gradient(#525252, #3d3d3d); border-color: #888; }
.fav { width: 16px; height: 16px; flex: none; position: relative; z-index: 1; margin-right: 2px; }
.tab-label { width: 37px; white-space: nowrap; overflow: hidden; position: relative; z-index: 1; -webkit-mask-image: linear-gradient(90deg, #000 55%, transparent 98%); mask-image: linear-gradient(90deg, #000 55%, transparent 98%); }
.tab-x { position: relative; z-index: 1; margin-left: 4px; color: #777; font-size: 14px; font-weight: bold; line-height: 1; }
.tab-new { width: 30px; height: 16px; margin: 7px 0 0 4px; background: #2a2a2a; border: 1px solid #444; transform: skewX(15deg); border-radius: 2px; }
.profile { position: absolute; left: 1353px; top: 5px; width: 82px; height: 25px; background: linear-gradient(#666, #505050); border: 1px solid #222; border-radius: 3px; color: #111; font-size: 12px; line-height: 24px; text-align: center; }
.toolbar { height: 33px; display: flex; align-items: center; background: linear-gradient(#363636, #1c1c1c); flex: none; }
.nav-btns { display: flex; gap: 12px; padding-left: 9px; width: 120px; flex: none; }
.nav-icon { width: 16px; height: 16px; flex: none; }
.omnibox { width: 1156px; height: 27px; background: #fff; border: 1px solid #111; outline: 1px solid #777; border-radius: 4px; display: flex; align-items: center; padding: 0 4px 0 8px; flex: none; }
.omni-doc { width: 12px; height: 16px; flex: none; margin-right: 6px; }
.url { font-size: 14.740px; color: #111; flex: 1; white-space: nowrap; }
.url-dim { color: #666; }
.omni-star { width: 18px; height: 18px; flex: none; }
.ext-btns { display: flex; gap: 14px; padding-left: 10px; }
.ext { width: 18px; height: 18px; flex: none; }
.bookmarks { height: 25px; background: linear-gradient(#161616, #000); display: flex; align-items: center; padding: 0 0 3px 9px; position: relative; flex: none; }
.bm { display: flex; align-items: center; gap: 5px; margin-right: 17px; flex: none; }
.bm-icon { width: 16px; height: 16px; flex: none; }
.bm-label { color: #c9c9c9; font-size: 11.300px; font-weight: bold; white-space: nowrap; overflow: hidden; font-family: "Liberation Sans", "Noto Sans CJK JP", sans-serif; }
.w-28 { width: 28px; } .w-34 { width: 34px; } .w-39 { width: 39px; } .w-113 { width: 113px; }
.fade { -webkit-mask-image: linear-gradient(90deg, #000 60%, transparent 98%); mask-image: linear-gradient(90deg, #000 60%, transparent 98%); }
.bm-more { position: absolute; right: 7px; top: 4px; color: #777; font-size: 13px; font-weight: bold; }

/* page */
.page { flex: 1; background: #fff; display: flex; flex-direction: column; }
.navbar { height: 52px; flex: none; background: #f8f8f8; border-bottom: 1px solid #e7e7e7; border-top: 1px solid #e7e7e7; display: flex; align-items: center; justify-content: space-between; padding: 0 150px; }
.brand { font-size: 18px; color: #777; }
.nav-actions { display: flex; gap: 5px; }
.btn { height: 34px; color: #fff; font-size: 14.700px; text-align: center; -webkit-text-stroke: .3px #fff; line-height: 32px; border-radius: 4px; }
.btn-green { width: 88px; background: #5cb85c; border: 1px solid #4cae4c; }
.btn-blue { width: 173px; background: #337ab7; border: 1px solid #2e6da4; }
.fb-f { font-weight: bold; }
.rule { height: 21px; border-bottom: 1px solid #eee; flex: none; }
.search-wrap { padding: 40px 135px 10px; flex: none; }
.search { height: 46px; border: 1px solid #ccc; border-radius: 4px; font-size: 18px; letter-spacing: .14px; line-height: 44px; color: #555; padding-left: 16px; box-shadow: inset 0 1px 1px rgba(0,0,0,.05); }
.results { display: flex; gap: 30px; padding-left: 150px; flex: none; height: 400px; }
.spots { list-style: none; margin: 0; padding: 0; width: 360px; height: 292px; border: 1px solid #ddd; border-radius: 4px; flex: none; }
.spot { height: 97px; padding: 16px 15px 0; border-bottom: 1px solid #ddd; }
.spot:last-child { border-bottom: 0; }
.spot h3 { margin: 15px 0 9px; font-size: 25px; line-height: 26px; font-weight: normal; -webkit-text-stroke: .55px #555; color: #555; white-space: nowrap; }
.spot p { margin: 0; font-size: 14.150px; line-height: 20px; color: #444; }
.map { width: 750px; height: 400px; position: relative; flex: none; overflow: hidden; }
.map-svg { display: block; }
.map-type { position: absolute; left: 10px; top: 10px; height: 31px; width: 93px; background: #fff; border-radius: 2px; box-shadow: 0 1px 3px rgba(0,0,0,.3); display: flex; align-items: center; font: 10.500px Roboto, sans-serif; color: #565656; }
.mt-active { width: 38px; text-align: center; color: #000; border-right: 1px solid #eee; line-height: 31px; }
.mt { flex: 1; text-align: center; }
.pegman { position: absolute; left: 712px; top: 283px; width: 28px; height: 28px; background: #fff; border-radius: 2px; display: flex; align-items: center; justify-content: center; box-shadow: 0 1px 3px rgba(0,0,0,.2); }
.zoom-ctl { position: absolute; left: 712px; top: 321px; width: 28px; height: 55px; background: #fff; border-radius: 2px; box-shadow: 0 1px 3px rgba(0,0,0,.2); display: flex; flex-direction: column; }
.z-btn { height: 27px; text-align: center; font: bold 20px/26px "Liberation Sans", sans-serif; color: #666; }
.z-minus { border-top: 1px solid #e6e6e6; margin: 0 4px; }
.attrib { position: absolute; right: 0; bottom: 0; left: 463px; height: 14px; background: rgba(245,245,245,.72); display: flex; justify-content: space-between; padding: 0 6px 0 5px; font: 10px/14px Roboto, sans-serif; color: #444; }
.footer { border-top: 1px solid #e7e7e7; padding: 19px 150px 0; display: flex; align-items: flex-start; gap: 4px; flex: none; }
.fb-btn { height: 20px; background: linear-gradient(#4a69ad, #3b5a9e); border-radius: 2px; color: #fff; font-size: 11px; font-weight: bold; line-height: 19px; padding: 0 5px 0 7px; display: flex; align-items: center; }
.fb-like { padding: 0 5px 0 4px; gap: 4px; width: 50px; }
.fb-mark { width: 14px; height: 14px; flex: none; }
.fb-count { width: 22px; height: 20px; margin-left: 3px; border: 1px solid #aaa; border-radius: 2px; font-size: 11px; line-height: 18px; text-align: center; color: #333; position: relative; background: #fff; }
.fb-count::before { content: ""; position: absolute; left: -4px; top: 6px; width: 6px; height: 6px; background: #fff; border-left: 1px solid #aaa; border-bottom: 1px solid #aaa; transform: rotate(45deg); }

/* map text */
.lbl text { font-family: Roboto, sans-serif; font-size: 10px; fill: #5e5e58; text-anchor: middle; stroke: #f0ede6; stroke-width: 2px; paint-order: stroke; stroke-opacity: .75; }
.lbl .lbl-road { fill: #7a4a10; stroke: #fde9a8; font-size: 10.500px; }
.lbl-area text { font-style: italic; fill: #9c8a6c; font-size: 10px; letter-spacing: .2px; }
.lbl-poi text { fill: #3e3e3a; font-size: 10.500px; }
.lbl-poi .lbl-mall { fill: #3d4a78; font-size: 11px; }
.lbl-town text { fill: #4e4e40; font-size: 12px; letter-spacing: .3px; }
.lbl .lbl-anchor-start { text-anchor: start; }
.lbl-city text { fill: #5a4a2e; font-size: 14.500px; font-weight: 500; letter-spacing: 1.200px; }
.lbl-boston { font-family: Roboto, sans-serif; font-size: 20px; font-weight: 500; fill: #5a4a2e; letter-spacing: 3px; }
.shield text { font: 9px Roboto, sans-serif; fill: #222; text-anchor: middle; }
.shield-i text { fill: #fff; font-size: 8.500px; font-weight: bold; }
.g-logo { font: 600 19px "Open Sans", sans-serif; stroke: #fff; stroke-width: 1.500px; paint-order: stroke; letter-spacing: -.3px; }
```
